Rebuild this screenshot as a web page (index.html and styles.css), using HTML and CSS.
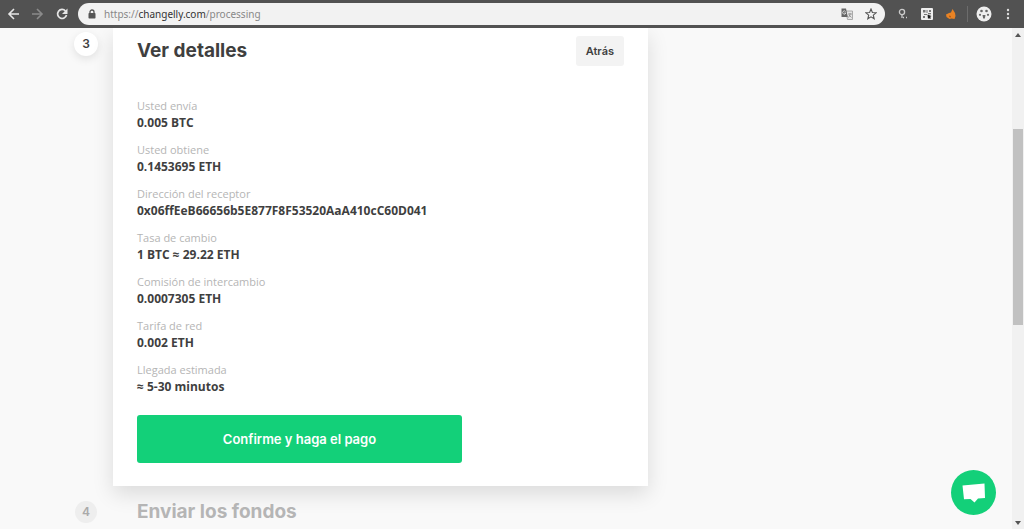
FILE: index.html
```html
<!DOCTYPE html>
<html lang="es">

<head>
  <meta charset="UTF-8">
  <meta name="viewport" content="width=device-width, initial-scale=1.0">
  <title>Changelly</title>

  <link rel="stylesheet" href="styles.css">
</head>

<body>
  <header class="toolbar">
    <button class="tool" type="button" aria-label="Back">
      <svg width="14" height="14" viewBox="0 0 14 14" fill="none" stroke="#e6e6e6" stroke-width="1.600"><path d="M12 7H2M7 2L2 7l5 5"/></svg>
    </button>
    <button class="tool" type="button" aria-label="Forward">
      <svg width="14" height="14" viewBox="0 0 14 14" fill="none" stroke="#8b8b8b" stroke-width="1.600"><path d="M1 7h10M6 2l5 5-5 5"/></svg>
    </button>
    <button class="tool" type="button" aria-label="Reload">
      <svg width="14" height="14" viewBox="0 0 14 14"><path d="M10.500 4A4.500 4.500 0 1 0 11.500 8" fill="none" stroke="#e6e6e6" stroke-width="1.700"/><path d="M12.500 1.500v5.500H7z" fill="#e6e6e6"/></svg>
    </button>

    <div class="address">
      <svg width="8" height="10" viewBox="0 0 8 10"><path d="M2 5V3a2 2 0 0 1 4 0v2" fill="none" stroke="#555" stroke-width="1.300"/><rect x="0.500" y="4" width="7" height="5.500" rx="0.700" fill="#555"/></svg>
      <a class="url" href="#">https://<span class="host">changelly.com</span>/processing</a>
      <button class="tool" type="button" aria-label="Translate">
        <svg width="12" height="12" viewBox="0 0 12 12"><path d="M5 3h6.500v8.500H6.500z" fill="#e4e4e4" stroke="#999" stroke-width="0.800"/><path d="M7 6h4M9 5v1c0 2-1 3-2 3.500M8 7l2.500 2.500" fill="none" stroke="#888" stroke-width="0.800"/><path d="M0.500 0.500H5l1.700 8.500H0.500z" fill="#666"/><path d="M4.600 3.700A1.600 1.600 0 1 0 4.800 5H3.300" fill="none" stroke="#eee" stroke-width="0.800"/></svg>
      </button>
      <button class="tool" type="button" aria-label="Bookmark">
        <svg width="12" height="12" viewBox="0 0 12 12"><path d="M6 1l1.400 3.500 3.700.3-2.800 2.400.9 3.600L6 8.900l-3.200 1.900.9-3.600L.9 4.800l3.700-.3z" fill="none" stroke="#555" stroke-width="1.100"/></svg>
      </button>
    </div>

    <div class="extensions">
      <button class="tool" type="button" aria-label="Search extension">
        <svg width="12" height="12" viewBox="0 0 12 12" fill="none" stroke="#ccc" stroke-width="1.300"><circle cx="5" cy="4" r="2.600"/><path d="M5 7v3M6 9.500h1M9 9.500h1"/></svg>
      </button>
      <button class="tool" type="button" aria-label="QR extension">
        <svg width="12" height="12" viewBox="0 0 12 12"><rect width="12" height="12" rx="1" fill="#eee"/><path d="M2 2h2.500v2.500H2zM8 2h2v2H8zM2 8h2v2H2zM5.500 2h1v3h-1zM3 6h3v1H3zM7 5h3v1.200H7z" fill="#777"/><path d="M6.500 6.500l4 1.500-1.500 1 1 1-1 1-1-1-1 1z" fill="#222"/></svg>
      </button>
      <button class="tool" type="button" aria-label="Wallet extension">
        <svg width="12" height="12" viewBox="0 0 12 12"><path d="M7.500 1l2.500 4 .5 3-1 3-3-.5-2 .5-3-2-.5-2.500L4 5l2-.5z" fill="#e98324"/><path d="M4 7.500l2 .5v1.500l-2-.5z" fill="#b85f14"/></svg>
      </button>
    </div>

    <button class="tool" type="button" aria-label="Profile">
      <svg width="16" height="16" viewBox="0 0 16 16"><circle cx="8" cy="8" r="7.500" fill="#eee"/><g fill="#666"><circle cx="5.500" cy="5" r="1.300"/><circle cx="10.500" cy="5" r="1.300"/><circle cx="4" cy="8.800" r="1.100"/><circle cx="12" cy="8.800" r="1.100"/><path d="M6.500 9h3L8.800 12.500H7.200z"/></g></svg>
    </button>
    <button class="tool menu" type="button" aria-label="Menu">
      <svg width="4" height="12" viewBox="0 0 4 12" fill="#ddd"><circle cx="2" cy="2" r="1.200"/><circle cx="2" cy="6" r="1.200"/><circle cx="2" cy="10" r="1.200"/></svg>
    </button>
  </header>

  <div class="view">
    <main class="steps">
      <section class="step">
        <span class="number active">3</span>
        <div class="card">
          <div class="card-header">
            <h2 class="title">Ver detalles</h2>
            <button class="back" type="button">Atrás</button>
          </div>

          <dl class="details">
            <div class="row">
              <dt>Usted envía</dt>
              <dd>0.005 BTC</dd>
            </div>
            <div class="row">
              <dt>Usted obtiene</dt>
              <dd>0.1453695 ETH</dd>
            </div>
            <div class="row">
              <dt>Dirección del receptor</dt>
              <dd>0x06ffEeB66656b5E877F8F53520AaA410cC60D041</dd>
            </div>
            <div class="row">
              <dt>Tasa de cambio</dt>
              <dd>1 BTC ≈ 29.22 ETH</dd>
            </div>
            <div class="row">
              <dt>Comisión de intercambio</dt>
              <dd>0.0007305 ETH</dd>
            </div>
            <div class="row">
              <dt>Tarifa de red</dt>
              <dd>0.002 ETH</dd>
            </div>
            <div class="row">
              <dt>Llegada estimada</dt>
              <dd>≈ 5-30 minutos</dd>
            </div>
          </dl>

          <button class="confirm" type="button">Confirme y haga el pago</button>
        </div>
      </section>

      <section class="step next">
        <span class="number">4</span>
        <h2 class="title">Enviar los fondos</h2>
      </section>
    </main>

    <div class="scrollbar">
      <svg width="6" height="4" viewBox="0 0 6 4"><path d="M0 4l3-4 3 4z" fill="#555"/></svg>
      <div class="track">
        <div class="thumb"></div>
      </div>
      <svg width="6" height="4" viewBox="0 0 6 4"><path d="M0 0l3 4 3-4z" fill="#555"/></svg>
    </div>
  </div>

  <button class="chat" type="button" aria-label="Chat">
    <svg width="24" height="22" viewBox="0 0 24 22"><path d="M0.500 3.500L22.500 1.500l.5 14.500-7 .5-3.500 4-4-3.500-6.500.3z" fill="#fff"/></svg>
  </button>
</body>

</html>
```

FILE: styles.css
```css
/* document */
* {
  box-sizing: border-box;
}

body {
  margin: 0;
  height: 100vh;
  display: flex;
  flex-direction: column;
  overflow: hidden;
  background: #f9f9f9;
  color: #3f3f3f;
  font-family: "Open Sans", sans-serif;
}

button {
  border: 0;
  padding: 0;
  font-family: Inter, sans-serif;
  cursor: pointer;
}

/* browser toolbar */
.toolbar {
  position: relative;
  z-index: 1;
  flex: none;
  height: 28px;
  padding: 0 8px 0 6px;
  display: flex;
  align-items: center;
  gap: 8px;
  background: #525252;
}

.tool {
  width: 16px;
  height: 16px;
  display: flex;
  align-items: center;
  justify-content: center;
  background: none;
}

.address {
  flex: 1;
  height: 22px;
  padding: 0 6px 0 10px;
  display: flex;
  align-items: center;
  gap: 8px;
  border-radius: 11px;
  background: #f2f2f2;
}

.url {
  flex: 1;
  font-family: "Noto Sans", sans-serif;
  font-size: 10px;
  color: #888;
  text-decoration: none;
}

.url .host {
  color: #333;
}

.extensions {
  display: flex;
  gap: 8px;
  padding: 0 8px 0 2px;
  border-right: 1px solid #6c6c6c;
}

/* page and scrollbar */
.view {
  flex: 1;
  min-height: 0;
  display: flex;
}

.steps {
  flex: 1;
  overflow: hidden;
}

.scrollbar {
  width: 12px;
  padding: 5px 1px 4px;
  display: flex;
  flex-direction: column;
  align-items: center;
  background: #f1f1f1;
}

.track {
  flex: 1;
  width: 100%;
  padding-top: 92px;
}

.thumb {
  height: 50%;
  background: #c1c1c1;
}

/* steps */
.step {
  display: grid;
  grid-template-columns: 113px minmax(0, 535px);
}

.number {
  width: 24px;
  height: 24px;
  margin: 4px 0 0 74px;
  border-radius: 50%;
  background: #eee;
  color: #aaa;
  font-family: Inter, sans-serif;
  font-size: 12px;
  font-weight: 600;
  line-height: 24px;
  text-align: center;
}

.number.active {
  background: #fff;
  color: #3f3f3f;
  box-shadow: 0 3px 8px rgba(0, 0, 0, 0.1);
}

.title {
  margin: 0;
  font-family: Inter, sans-serif;
  font-size: 19px;
  font-weight: 700;
  line-height: 24px;
}

.next {
  padding-top: 14px;
}

.next .number {
  width: 22px;
  height: 22px;
  margin: 1px 0 0 75px;
  line-height: 22px;
}

.next .title {
  padding-left: 24px;
  color: #b5b5b5;
}

/* details card */
.card {
  padding: 8px 24px 23px;
  background: #fff;
  box-shadow: 0 8px 20px rgba(0, 0, 0, 0.12);
}

.card-header {
  display: flex;
  align-items: center;
  justify-content: space-between;
}

.back {
  height: 30px;
  padding: 0 10px;
  border-radius: 3px;
  background: #f3f3f3;
  color: #3f3f3f;
  font-size: 11px;
  font-weight: 600;
}

.details {
  margin: 31px 0 20px;
  display: grid;
  gap: 10px;
}

.details dt {
  color: #b5b5b5;
  font-size: 11px;
  line-height: 17px;
}

.details dd {
  margin: 0;
  font-size: 12px;
  font-weight: 700;
  line-height: 17px;
}

.confirm {
  width: 100%;
  max-width: 325px;
  height: 48px;
  border-radius: 3px;
  background: #13d079;
  color: #fff;
  font-size: 13px;
  font-weight: 600;
}

/* chat bubble */
.chat {
  position: fixed;
  right: 28px;
  bottom: 14px;
  width: 45px;
  height: 45px;
  display: flex;
  align-items: center;
  justify-content: center;
  border-radius: 50%;
  background: #13d079;
}
```
